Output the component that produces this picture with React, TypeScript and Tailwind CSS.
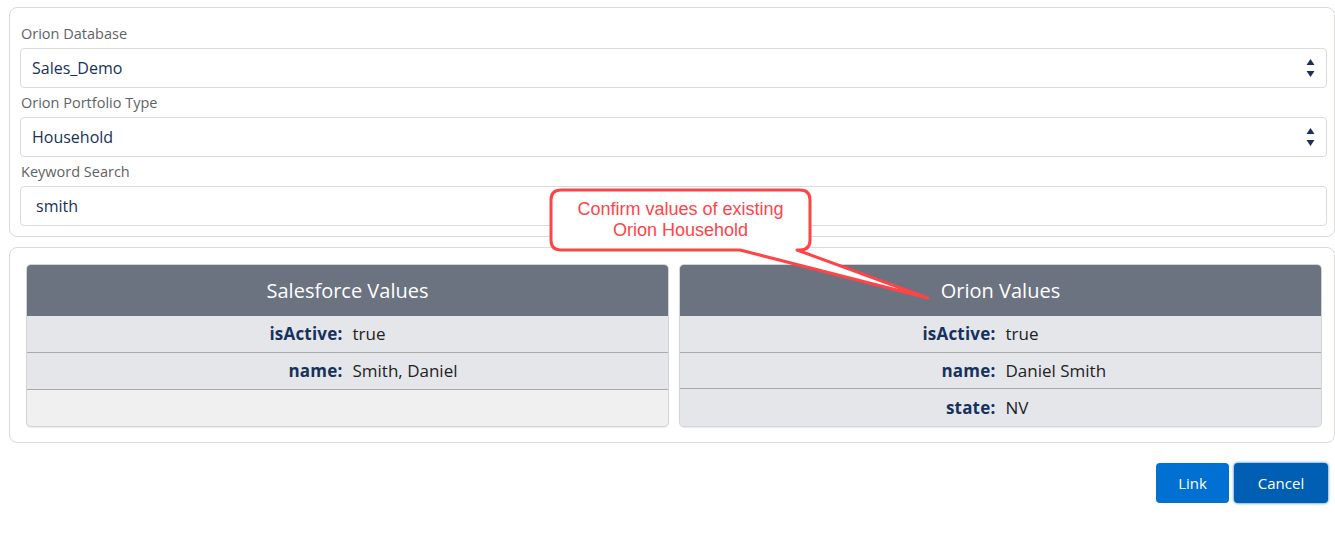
import React from "react";

const font = { fontFamily: '"Open Sans", "Noto Sans", Arial, sans-serif' };

function Arrows() {
  return (
    <svg width="9" height="20" viewBox="0 0 9 20" className="shrink-0">
      <path d="M4.5 1 L8.5 7 L0.5 7 Z" fill="#16325c" />
      <path d="M0.5 13 L8.5 13 L4.5 19 Z" fill="#16325c" />
    </svg>
  );
}

function Field({ label, value, select, indent }: { label: string; value: string; select?: boolean; indent?: boolean }) {
  return (
    <div className="flex flex-col">
      <div className="h-[20px] leading-[20px] text-[14.5px] text-[#5f6368] pl-[1px]">{label}</div>
      <div className="mt-[4px] h-[40px] border border-[#dddbda] rounded-[4px] bg-white flex items-center justify-between pl-[11px] pr-[11px]">
        <span className={`text-[16px] text-[#16325c] ${indent ? "pl-[4px]" : ""}`}>{value}</span>
        {select && <Arrows />}
      </div>
    </div>
  );
}

function Row({ k, v, last }: { k: string; v: string; last?: boolean }) {
  return (
    <div className={`h-[37px] flex items-center bg-[#e5e6ea] ${last ? "" : "border-b border-[#a9a9a9]"}`}>
      <div className="flex-1 text-right pr-[6px] text-[17px] font-bold tracking-[0.2px] text-[#16325c]">{k}:</div>
      <div className="flex-1 pl-[4px] text-[17px] text-[#222]">{v}</div>
    </div>
  );
}

function Table({ title, rows, empty }: { title: string; rows: [string, string][]; empty?: boolean }) {
  return (
    <div className="w-[643px] h-[163px] rounded-[5px] border border-[#d4d4d4] overflow-hidden flex flex-col bg-[#f0f0f0] shadow-[0_1px_1px_rgba(0,0,0,0.08)]">
      <div className="h-[51px] shrink-0 bg-[#6b7280] flex items-center justify-center text-white text-[20px]">{title}</div>
      {rows.map(([k, v], i) => (
        <Row key={k} k={k} v={v} last={!empty && i === rows.length - 1} />
      ))}
    </div>
  );
}

export default function App() {
  return (
    <div className="relative w-[1335px] h-[551px] bg-white overflow-hidden" style={font}>
      <div className="pt-[7px] pl-[9px]">
        <div className="w-[1326px] border border-[#dddbda] rounded-[8px] pt-[16px] pb-[10px] pl-[10px] pr-[7px] flex flex-col gap-[5px]">
          <Field label="Orion Database" value="Sales_Demo" select />
          <Field label="Orion Portfolio Type" value="Household" select />
          <Field label="Keyword Search" value="smith" indent />
        </div>
        <div className="mt-[10px] w-[1326px] h-[196px] border border-[#dddbda] rounded-[8px] pt-[16px] pl-[16px] flex gap-[10px]">
          <Table title="Salesforce Values" rows={[["isActive", "true"], ["name", "Smith, Daniel"]]} empty />
          <Table title="Orion Values" rows={[["isActive", "true"], ["name", "Daniel Smith"], ["state", "NV"]]} />
        </div>
        <div className="mt-[20px] flex justify-end gap-[5px] pr-[7px]">
          <button className="w-[73px] h-[40px] rounded-[4px] bg-[#0070d2] text-white text-[15px]">Link</button>
          <button className="w-[94px] h-[40px] rounded-[4px] bg-[#005fb2] text-white text-[15px] shadow-[0_0_3px_#0070d2]">Cancel</button>
        </div>
      </div>

      {/* callout */}
      <svg className="absolute left-0 top-0 pointer-events-none" width="1335" height="551">
        <path
          d="M561 190 H800 Q810 190 810 200 V240 Q810 250 800 250 H797 L928 298 L740 250 H561 Q551 250 551 240 V200 Q551 190 561 190 Z"
          fill="white"
          stroke="#ff4447"
          strokeWidth="3"
          strokeLinejoin="round"
        />
      </svg>
      <div
        className="absolute left-[551px] top-[199px] w-[259px] text-center text-[#ff4447] text-[18px] leading-[21px]"
        style={{ fontFamily: '"Liberation Sans", Arial, sans-serif' }}
      >
        Confirm values of existing
        <br />
        Orion Household
      </div>
    </div>
  );
}
